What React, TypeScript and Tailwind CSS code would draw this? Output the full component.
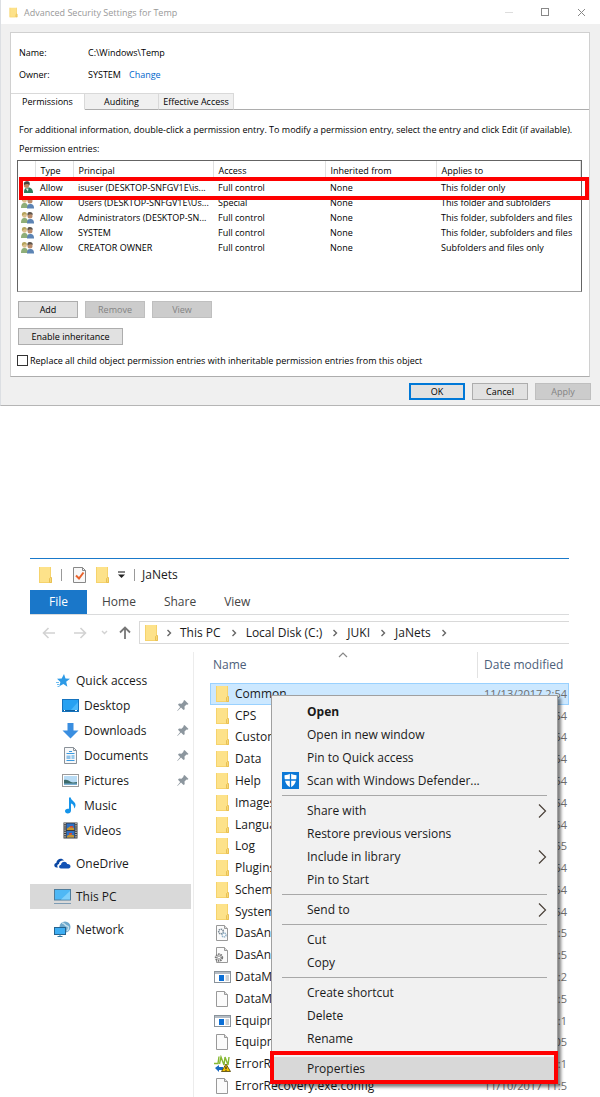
import type { ReactNode } from "react";
import { Fragment } from "react";

type IconProps = { className?: string };

type Permission = {
	principal: string;
	access: string;
	appliesTo: string;
	single?: boolean;
};

type FileKind = "folder" | "gears" | "config" | "exe" | "file" | "recovery";

type FileEntry = { name: string; date: string; kind: FileKind };

type MenuEntry = {
	label: string;
	bold?: boolean;
	submenu?: boolean;
	shield?: boolean;
};

const permissions: Permission[] = [
	{
		principal: "isuser (DESKTOP-SNFGV1E\\is...",
		access: "Full control",
		appliesTo: "This folder only",
		single: true,
	},
	{
		principal: "Users (DESKTOP-SNFGV1E\\Us...",
		access: "Special",
		appliesTo: "This folder and subfolders",
	},
	{
		principal: "Administrators (DESKTOP-SN...",
		access: "Full control",
		appliesTo: "This folder, subfolders and files",
	},
	{
		principal: "SYSTEM",
		access: "Full control",
		appliesTo: "This folder, subfolders and files",
	},
	{
		principal: "CREATOR OWNER",
		access: "Full control",
		appliesTo: "Subfolders and files only",
	},
];

const files: FileEntry[] = [
	{ name: "Common", date: "11/13/2017 2:54", kind: "folder" },
	{ name: "CPS", date: "11/13/2017 2:54", kind: "folder" },
	{ name: "Custom", date: "11/13/2017 2:54", kind: "folder" },
	{ name: "Data", date: "11/13/2017 2:54", kind: "folder" },
	{ name: "Help", date: "11/13/2017 2:54", kind: "folder" },
	{ name: "Images", date: "11/13/2017 2:54", kind: "folder" },
	{ name: "Language", date: "11/13/2017 2:54", kind: "folder" },
	{ name: "Log", date: "11/13/2017 2:55", kind: "folder" },
	{ name: "Plugins", date: "11/13/2017 2:54", kind: "folder" },
	{ name: "Schema", date: "11/13/2017 2:54", kind: "folder" },
	{ name: "System", date: "11/13/2017 2:54", kind: "folder" },
	{ name: "DasAnd", date: "11/10/2017 11:5", kind: "gears" },
	{ name: "DasAnd", date: "11/10/2017 11:5", kind: "config" },
	{ name: "DataMa", date: "11/10/2017 12:2", kind: "exe" },
	{ name: "DataMa", date: "11/10/2017 11:5", kind: "file" },
	{ name: "Equipm", date: "11/10/2017 12:1", kind: "exe" },
	{ name: "Equipm", date: "11/10/2017 9:05", kind: "file" },
	{ name: "ErrorRe", date: "11/10/2017 12:1", kind: "recovery" },
	{ name: "ErrorRecovery.exe.config", date: "11/10/2017 11:5", kind: "file" },
];

const menuGroups: MenuEntry[][] = [
	[
		{ label: "Open", bold: true },
		{ label: "Open in new window" },
		{ label: "Pin to Quick access" },
		{ label: "Scan with Windows Defender...", shield: true },
	],
	[
		{ label: "Share with", submenu: true },
		{ label: "Restore previous versions" },
		{ label: "Include in library", submenu: true },
		{ label: "Pin to Start" },
	],
	[{ label: "Send to", submenu: true }],
	[{ label: "Cut" }, { label: "Copy" }],
	[{ label: "Create shortcut" }, { label: "Delete" }, { label: "Rename" }],
];

const FolderIcon = ({ className = "w-[15px] h-[18px]" }: IconProps) => (
	<svg viewBox="0 0 15 18" className={className}>
		<path d="M1 1h12v11h1v5H1z" fill="#fde28a" />
		<path d="M1 1h1v16H1zM1 16h10v1H1zM12 1h1v11h-1z" fill="#f6d36c" />
		<path d="M11.500 16.500v-4l1-1h1v5z" fill="#f9d976" stroke="#e3b94a" strokeWidth=".8" />
	</svg>
);

const Page = ({ children }: { children?: ReactNode }) => (
	<svg viewBox="0 0 17 18" className="w-[17px] h-[18px]">
		<path d="M2.500 1.500h8l3 3v12h-11z" fill="#fbfbfb" stroke="#999" />
		<path d="M10.500 1.500v3h3" fill="#ddd" stroke="#999" />
		{children}
	</svg>
);

const FileIcon = ({ kind }: { kind: FileKind }) => {
	switch (kind) {
		case "folder":
			return <FolderIcon className="w-[15px] h-[18px] mx-px" />;
		case "gears":
			return (
				<Page>
					<circle cx="7" cy="7.500" r="2.300" fill="none" stroke="#7d8b96" strokeWidth="1.600" strokeDasharray="1.300 .6" />
					<circle cx="10" cy="11" r="2" fill="none" stroke="#8fb0c8" strokeWidth="1.500" strokeDasharray="1.200 .6" />
				</Page>
			);
		case "config":
			return (
				<Page>
					<circle cx="5" cy="11.500" r="3.200" fill="#eee" stroke="#777" strokeWidth="2" strokeDasharray="1.500 .8" />
					<circle cx="5" cy="11.500" r="1.500" fill="#fff" stroke="#888" strokeWidth=".8" />
				</Page>
			);
		case "exe":
			return (
				<svg viewBox="0 0 17 18" className="w-[17px] h-[18px]">
					<rect x=".5" y="3.500" width="16" height="11" fill="#fff" stroke="#8a939b" />
					<path d="M1 4h15v2H1z" fill="#b4bcc4" />
					<path d="M5 7h5v6H5z" fill="#0b6fd6" />
					<path d="M11.500 8h3.500M11.500 10h3.500M11.500 12h3.500" stroke="#9aa3ab" />
				</svg>
			);
		case "recovery":
			return (
				<svg viewBox="0 0 17 18" className="w-[17px] h-[18px]">
					<path d="M0 8.500h4L5 1.500M5.500 9L7 2l3 8 1-8 3 8 1-8" fill="none" stroke="#86b832" strokeWidth="1.400" />
					<path d="M1 13l4-3v2h4v3H5v2z" fill="#1769c2" />
					<path d="M12 9l4.500 7.500h-9z" fill="#f5c400" stroke="#4a3d00" strokeWidth=".8" />
					<path d="M12 11.500V14M12 14.800v1" stroke="#222" strokeWidth="1.200" />
				</svg>
			);
		default:
			return <Page />;
	}
};

const UserIcon = () => (
	<svg viewBox="0 0 13 13" className="w-[13px] h-[13px]">
		<path d="M3 12c0-4 1-5.500 4-5.500s5 1.500 5 5.500z" fill="#2f7d5b" />
		<path d="M4.500 7.500l2.500 3 .5-3z" fill="#dfe8e2" />
		<circle cx="5.500" cy="4.200" r="2.600" fill="#c08a62" />
		<path d="M3 4C2.500 1 4 .3 6 .3s3.500 1.200 2.500 4.200C7.500 3 6 2.500 3 4z" fill="#4a443d" />
	</svg>
);

const GroupIcon = () => (
	<svg viewBox="0 0 13 13" className="w-[13px] h-[13px]">
		<path d="M0 12c0-4 1.500-5 3.500-5S7 8 7 12z" fill="#8fae78" />
		<circle cx="3.500" cy="4.500" r="2.300" fill="#dcc08e" />
		<path d="M1 5c-.5-3.500 1-4 2.500-4S6 2 6 4C5 2.800 3 2.800 1 5z" fill="#b5a45c" />
		<path d="M6 12.500c0-4 1.500-4.500 3.500-4.500s3.500 1 3.500 4.500z" fill="#5c84b4" />
		<circle cx="9" cy="5" r="2.500" fill="#b98b6a" />
		<path d="M6.500 4.500C6 1.500 7.500 1 9 1s3.200 1 2.700 3C10.500 3 8.500 3 6.500 4.500z" fill="#5d544b" />
	</svg>
);

const StarIcon = () => (
	<svg viewBox="0 0 17 17" className="w-[17px] h-[17px]">
		<path d="M10 2l1.500 4.500 4.500.2-3.800 3 1.200 5-4-2.600-4 2.200 1-4.300L3 6.700l4.700-.2z" fill="#2d9ae6" />
		<path d="M2 10.500h3M3 12.500h2.500M3.500 14.500h2" stroke="#6dbcf0" />
	</svg>
);

const DesktopIcon = () => (
	<svg viewBox="0 0 17 17" className="w-[17px] h-[17px]">
		<rect x=".5" y="2.500" width="16" height="12" fill="#27a1f2" stroke="#1573be" />
		<path d="M8 14L16 5v9z" fill="#4cb8fa" />
		<path d="M1 13.500h15" stroke="#0f5f9f" />
		<path d="M2 13.500h1M13 13.500h2" stroke="#fff" />
	</svg>
);

const DownloadIcon = () => (
	<svg viewBox="0 0 17 17" className="w-[17px] h-[17px]">
		<path d="M5.500 1h6v7.500h5L8.500 16.500.5 8.500h5z" fill="#3a8ee0" />
	</svg>
);

const DocumentIcon = () => (
	<svg viewBox="0 0 17 17" className="w-[17px] h-[17px]">
		<path d="M2.500.5h9l3 3v13h-12z" fill="#f7f8f9" stroke="#8b9299" />
		<path d="M11.500.5v3h3" fill="none" stroke="#8b9299" />
		<path d="M7 4.500h3M4.500 6.500h8M9.500 9h3M9.500 11h3M4.500 13.500h8" stroke="#3b9ae0" strokeWidth="1.200" />
		<path d="M4.500 8.500h4v3.500h-4z" fill="#8ec1e8" />
	</svg>
);

const PictureIcon = () => (
	<svg viewBox="0 0 17 17" className="w-[17px] h-[17px]">
		<rect x=".5" y="2.500" width="16" height="12" fill="#fff" stroke="#9b9b9b" />
		<rect x="2" y="4" width="13" height="9" fill="#b9dcf5" />
		<path d="M2 8c3-1 5 1 7 2s4 0 6 0v3H2z" fill="#3d6b6b" />
		<path d="M2 11.500h13V13H2z" fill="#7ab0d4" />
	</svg>
);

const MusicIcon = () => (
	<svg viewBox="0 0 17 17" className="w-[17px] h-[17px]">
		<path d="M7 .5h1.800c0 3 4.700 4 4.700 7.500 0 1.500-.5 2.500-1.300 3.500 0-3-1.500-4.500-3.200-5v7c0 2-1.500 3-3.200 3S3 15.500 3 14s1.500-2.700 4-2.200z" fill="#1594ea" />
	</svg>
);

const VideoIcon = () => (
	<svg viewBox="0 0 17 17" className="w-[17px] h-[17px]">
		<rect x="1.500" y=".5" width="14" height="16" fill="#3a3a3a" />
		<path d="M3 1v15M14 1v15" stroke="#e5e5e5" strokeWidth="1.200" strokeDasharray="1.200 1" />
		<rect x="4.500" y="1.500" width="8" height="6.500" fill="#2d6fc4" />
		<rect x="4.500" y="9" width="8" height="6.500" fill="#2d6fc4" />
		<path d="M5 6.500l3-2 4 1.500v2H5zM5 14l3-2 4 1.500v2H5z" fill="#c8962c" />
		<path d="M8 4h3v1.500H8zM7 11h3v1.500H7z" fill="#d8432f" />
	</svg>
);

const CloudIcon = () => (
	<svg viewBox="0 0 17 17" className="w-[17px] h-[17px]">
		<path d="M4 12.500H2.500C-.5 12-.3 8.500 2.300 8 2.500 4 7.500 2 10 5.500c-3-.5-5 1-5 3.500-2 .5-2.200 2.500-1 3.500z" fill="#0a47a3" />
		<path d="M7 13.500c-2.500 0-2.500-3.500 0-3.700.3-3.500 5.200-4 6.200-.8 2-.3 3.300 1 3.300 2.300s-.8 2.200-2 2.200z" fill="#1252b5" />
	</svg>
);

const ComputerIcon = () => (
	<svg viewBox="0 0 17 17" className="w-[17px] h-[17px]">
		<rect x=".5" y="1.500" width="16" height="10.500" fill="#4fb8f5" stroke="#4f7c9b" />
		<path d="M7 11.500L16 3v8.500z" fill="#7fd0fb" />
		<path d="M0 15.500h17" stroke="#7d9bb3" />
	</svg>
);

const NetworkIcon = () => (
	<svg viewBox="0 0 17 17" className="w-[17px] h-[17px]">
		<circle cx="11" cy="6" r="5.500" fill="#6fa9cc" />
		<path d="M8 2c3 0 3 3 5 3s2 3 0 5" fill="none" stroke="#c5dfec" strokeWidth="1.500" />
		<rect x=".5" y="6.500" width="11" height="7" fill="#3eaef3" stroke="#25638f" />
		<path d="M6 13v2.500M3.500 15.500h5" stroke="#35789f" />
	</svg>
);

const PinIcon = () => (
	<svg viewBox="0 0 12 12" className="w-3 h-3">
		<path d="M7.500 0l4 4-1.200.8-.8-.3-2 2 .2 2.700-1.200.8-2.500-2.500L.5 11l-.3-.3 3-3.700L1 4.800l1-1.200 2.500.2 2-2L6.300 1z" fill="#8c969e" />
	</svg>
);

const ShieldIcon = () => (
	<svg viewBox="0 0 17 17" className="w-[17px] h-[17px]">
		<rect width="17" height="17" fill="#0b78d7" />
		<path d="M8.500 1.500c2 1.200 4 1.700 6 1.700 0 6-1.500 10-6 12.300-4.500-2.300-6-6.300-6-12.300 2 0 4-.5 6-1.700z" fill="#fff" />
		<path d="M8.500 1v15M2 8h13" stroke="#0b78d7" strokeWidth="1.300" />
	</svg>
);

const quickAccess = [
	{ label: "Desktop", icon: <DesktopIcon />, pinned: true },
	{ label: "Downloads", icon: <DownloadIcon />, pinned: true },
	{ label: "Documents", icon: <DocumentIcon />, pinned: true },
	{ label: "Pictures", icon: <PictureIcon />, pinned: true },
	{ label: "Music", icon: <MusicIcon />, pinned: false },
	{ label: "Videos", icon: <VideoIcon />, pinned: false },
];

const Crumb = ({ label }: { label: string }) => (
	<>
		<button type="button">{label}</button>
		<svg viewBox="0 0 6 8" className="ml-2.5 mr-[9px] h-2 w-1.5">
			<path d="M1.500 1l3 3-3 3" fill="none" stroke="#666" strokeWidth="1.400" />
		</svg>
	</>
);

const SecurityDialog = () => {
	const button = "h-[17px] border border-[#adadad] bg-[#e1e1e1]";
	const disabled = "h-[17px] border border-[#bfbfbf] bg-[#cccccc] text-[#838383]";

	return (
		<section className="border-l border-b border-l-[#dcdfe3] border-b-[#b5b5b5] bg-[#f0f0f0] text-[9px] leading-[15px] text-black">
			<header className="flex h-6 items-center bg-white pl-2 pr-3.5 text-[#999]">
				<FolderIcon className="w-[9px] h-[11px] mr-1.5" />
				<h1 className="flex-1">Advanced Security Settings for Temp</h1>
				<button type="button" aria-label="Minimize" className="mr-[27px]">
					<svg viewBox="0 0 9 9" className="w-[9px] h-[9px]">
						<path d="M0 4.500h8" stroke="#ddd" />
					</svg>
				</button>
				<button type="button" aria-label="Maximize" className="mr-[27px]">
					<svg viewBox="0 0 9 9" className="w-[9px] h-[9px]">
						<rect x=".5" y=".5" width="7" height="7" fill="none" stroke="#888" />
					</svg>
				</button>
				<button type="button" aria-label="Close">
					<svg viewBox="0 0 9 9" className="w-[9px] h-[9px]">
						<path d="M1 1l7 7M8 1L1 8" stroke="#888" />
					</svg>
				</button>
			</header>

			<div className="ml-[9px] mr-2.5 mt-2 border border-[#d0d0d0] border-b-[#adadad] bg-white">
				<dl className="grid grid-cols-[69px_1fr] gap-y-[7px] px-2 pt-3">
					<dt>Name:</dt>
					<dd>C:\Windows\Temp</dd>
					<dt>Owner:</dt>
					<dd>
						SYSTEM
						<a href="#owner" className="ml-2 text-[#0066cc]">
							Change
						</a>
					</dd>
				</dl>

				<div className="mt-[11px] flex h-[17px]" role="tablist">
					<button type="button" role="tab" className="w-[74px] border-t border-r border-b border-[#d9d9d9] border-b-white">
						Permissions
					</button>
					<button type="button" role="tab" className="w-[74px] border-t border-r border-b border-[#d9d9d9] border-b-[#adadad] bg-[#f0f0f0]">
						Auditing
					</button>
					<button type="button" role="tab" className="w-[75px] whitespace-nowrap border-t border-r border-b border-[#d9d9d9] border-b-[#adadad] bg-[#f0f0f0]">
						Effective Access
					</button>
					<div className="flex-1 border-b border-[#adadad]" />
				</div>

				<div className="pb-2 pl-1.5 pr-[7px] pt-3">
					<p className="whitespace-nowrap pl-0.5">
						For additional information, double-click a permission entry. To modify a permission entry, select the entry and click Edit (if available).
					</p>
					<p className="mt-1 pl-0.5">Permission entries:</p>

					<div className="relative mt-1 h-[132px] border border-[#646464] border-b-[#a0a0a0]">
						<table className="w-full table-fixed whitespace-nowrap text-left">
							<colgroup>
								<col className="w-[17px]" />
								<col className="w-[38px]" />
								<col className="w-[140px]" />
								<col className="w-[112px]" />
								<col className="w-[111px]" />
								<col />
							</colgroup>
							<thead>
								<tr className="h-[19px]">
									{["", "Type", "Principal", "Access", "Inherited from", "Applies to"].map((title) => (
										<th key={title} className="border-r border-[#e0e0e0] p-0 pl-[5px] font-normal">
											{title}
										</th>
									))}
								</tr>
							</thead>
							<tbody>
								{permissions.map((entry) => (
									<tr key={entry.principal} className="h-[15px]">
										<td className="p-0 pl-[3px]">
											{entry.single ? <UserIcon /> : <GroupIcon />}
										</td>
										<td className="p-0 pl-[5px]">Allow</td>
										<td className="p-0 pl-[5px]">{entry.principal}</td>
										<td className="p-0 pl-[5px]">{entry.access}</td>
										<td className="p-0 pl-[5px]">None</td>
										<td className="p-0 pl-[5px]">{entry.appliesTo}</td>
									</tr>
								))}
							</tbody>
						</table>
						<div className="pointer-events-none absolute top-4 left-px -right-2 h-[23px] border-4 border-[#fe0000]" />
					</div>

					<div className="mt-[9px] flex gap-[7px] pl-px">
						<button type="button" className={`w-[60px] ${button}`}>
							Add
						</button>
						<button type="button" disabled className={`w-[60px] ${disabled}`}>
							Remove
						</button>
						<button type="button" disabled className={`w-[60px] ${disabled}`}>
							View
						</button>
					</div>
					<div className="mt-2.5 flex pl-px">
						<button type="button" className={`w-[105px] ${button}`}>
							Enable inheritance
						</button>
					</div>
					<div className="mt-2 flex items-center gap-0.5">
						<input
							id="replace-children"
							type="checkbox"
							className="size-[11px] appearance-none border border-[#333] bg-white"
						/>
						<label htmlFor="replace-children">
							Replace all child object permission entries with inheritable permission entries from this object
						</label>
					</div>
				</div>
			</div>

			<footer className="flex justify-end gap-[7px] pb-[5px] pr-[9px] pt-1.5">
				<button type="button" className="h-[17px] w-14 border-2 border-[#0078d7] bg-[#e1e1e1] leading-[13px]">
					OK
				</button>
				<button type="button" className={`w-14 ${button}`}>
					Cancel
				</button>
				<button type="button" disabled className={`w-14 ${disabled}`}>
					Apply
				</button>
			</footer>
		</section>
	);
};

const Sidebar = () => (
	<nav className="w-[164px] shrink-0 border-r border-[#ececec] pt-4 text-[#1a1a1a]">
		<a href="#quick" className="flex h-[25px] items-center gap-[5px] pl-6">
			<StarIcon />
			Quick access
		</a>
		{quickAccess.map((item) => (
			<a key={item.label} href="#folder" className="flex h-[25px] items-center gap-[5px] pl-8 pr-1">
				{item.icon}
				<span className="flex-1">{item.label}</span>
				{item.pinned && <PinIcon />}
			</a>
		))}
		<a href="#onedrive" className="mt-2 flex h-[25px] items-center gap-[5px] pl-6">
			<CloudIcon />
			OneDrive
		</a>
		<a href="#pc" className="mr-0.5 mt-2 flex h-[25px] items-center gap-[5px] bg-[#d9d9d9] pl-6">
			<ComputerIcon />
			This PC
		</a>
		<a href="#network" className="mt-2 flex h-[25px] items-center gap-[5px] pl-6">
			<NetworkIcon />
			Network
		</a>
	</nav>
);

const FileList = () => (
	<table className="h-[445px] w-full table-fixed whitespace-nowrap text-left">
		<colgroup>
			<col />
			<col className="w-[92px]" />
		</colgroup>
		<thead>
			<tr className="h-[31px] text-[#4c607a]">
				<th className="relative p-0 pb-[5px] pl-[3px] font-normal">
					Name
					<svg viewBox="0 0 10 6" className="absolute left-1/2 top-0 -ml-1.5 h-1.5 w-2.5">
						<path d="M1 5l4-4 4 4" fill="none" stroke="#888" strokeWidth="1.200" />
					</svg>
				</th>
				<th className="p-0 pb-[5px] font-normal">
					<div className="border-l border-[#e2e2e2] py-[5px] pl-1.5">Date modified</div>
				</th>
			</tr>
		</thead>
		<tbody>
			{files.map((file, index) => (
				<tr
					key={index}
					className={index === 0 ? "bg-[#cce8ff] outline outline-1 -outline-offset-1 outline-[#99d1ff]" : ""}
				>
					<td className="p-0 pl-1">
						<div className="flex items-center gap-1">
							<FileIcon kind={file.kind} />
							<span className="text-[#1a1a1a]">{file.name}</span>
						</div>
					</td>
					<td className="overflow-hidden p-0 pl-[7px] text-[11px] text-[#6d6d6d]">{file.date}</td>
				</tr>
			))}
		</tbody>
	</table>
);

const ContextMenu = () => (
	<div
		role="menu"
		className="absolute left-[241px] top-[136px] w-[287px] border border-[#a0a0a0] bg-[#f1f1f1] pb-[3px] pt-1 text-[#1a1a1a] shadow-[3px_3px_3px_rgba(0,0,0,0.5)]"
	>
		{menuGroups.map((group, index) => (
			<Fragment key={index}>
				{group.map((item) => (
					<button
						key={item.label}
						type="button"
						role="menuitem"
						className="flex h-[23px] w-full items-center pl-2.5 pr-2.5 text-left"
					>
						<span className="w-[25px]">{item.shield && <ShieldIcon />}</span>
						<span className={item.bold ? "flex-1 font-bold" : "flex-1"}>{item.label}</span>
						{item.submenu && (
							<svg viewBox="0 0 9 14" className="h-3.5 w-[9px]">
								<path d="M1 .5L7.500 7 1 13.500" fill="none" stroke="#4a4038" strokeWidth="1.200" />
							</svg>
						)}
					</button>
				))}
				<hr className="mx-2.5 my-[3px] border-t border-[#a8a8a8]" />
			</Fragment>
		))}
		<button type="button" role="menuitem" className="flex h-[23px] w-full items-center bg-[#d8d8d8] pl-[35px] text-left">
			Properties
		</button>
		<div className="pointer-events-none absolute -bottom-px -left-0.5 -right-px h-[33px] border-4 border-[#fe0000]" />
	</div>
);

const Explorer = () => (
	<section className="relative ml-[30px] mr-[31px] mt-[152px] border-t border-[#1979ca] text-[12px] leading-4">
		<header className="flex h-[31px] items-center pl-2 text-[#1a1a1a]">
			<FolderIcon />
			<span className="ml-2 h-3 w-px bg-[#999]" />
			<button type="button" aria-label="Properties" className="ml-2.5">
				<svg viewBox="0 0 15 18" className="w-[15px] h-[18px]">
					<path d="M1.500 1.500h9l3 3v12h-12z" fill="#f8f8f8" stroke="#888" />
					<path d="M10.500 1.500v3h3" fill="none" stroke="#888" />
					<path d="M4 9.500l3 3 4.500-6" fill="none" stroke="#e8622c" strokeWidth="2" />
				</svg>
			</button>
			<button type="button" aria-label="New folder" className="ml-2">
				<FolderIcon />
			</button>
			<button type="button" aria-label="Customize" className="ml-[7px]">
				<svg viewBox="0 0 9 9" className="w-[9px] h-[9px]">
					<path d="M1 2h7" stroke="#333" strokeWidth="1.200" />
					<path d="M1 4.500h7L4.500 8z" fill="#222" />
				</svg>
			</button>
			<span className="ml-2 h-3 w-px bg-[#999]" />
			<h2 className="ml-[7px]">JaNets</h2>
		</header>

		<div className="flex h-[25px] border-b border-[#dadbdc] text-[#444]">
			<button type="button" className="w-[57px] bg-[#1a77c9] text-white">
				File
			</button>
			<div className="flex gap-7 pl-[15px]">
				<button type="button">Home</button>
				<button type="button">Share</button>
				<button type="button">View</button>
			</div>
		</div>

		<div className="mt-1.5 flex h-[23px] items-center">
			<button type="button" aria-label="Back" className="ml-3">
				<svg viewBox="0 0 14 12" className="w-3.5 h-3">
					<path d="M6.500 1l-5 5 5 5M1.500 6H13" fill="none" stroke="#d2d2d2" strokeWidth="1.600" />
				</svg>
			</button>
			<button type="button" aria-label="Forward" className="ml-[17px]">
				<svg viewBox="0 0 14 12" className="w-3.5 h-3">
					<path d="M7.500 1l5 5-5 5M12.500 6H1" fill="none" stroke="#d2d2d2" strokeWidth="1.600" />
				</svg>
			</button>
			<button type="button" aria-label="Recent locations" className="ml-3.5">
				<svg viewBox="0 0 7 5" className="w-[7px] h-[5px]">
					<path d="M1 1l2.500 2.500L6 1" fill="none" stroke="#d2d2d2" strokeWidth="1.400" />
				</svg>
			</button>
			<button type="button" aria-label="Up" className="ml-[11px]">
				<svg viewBox="0 0 12 13" className="w-3 h-[13px]">
					<path d="M1 6.500l5-5 5 5M6 1.500V13" fill="none" stroke="#777" strokeWidth="1.800" />
				</svg>
			</button>
			<div className="ml-2 flex h-[23px] flex-1 items-center border border-r-0 border-[#d9d9d9] pl-1 text-[#1a1a1a]">
				<FolderIcon />
				<svg viewBox="0 0 6 8" className="ml-[7px] mr-2 h-2 w-1.5">
					<path d="M1.500 1l3 3-3 3" fill="none" stroke="#666" strokeWidth="1.400" />
				</svg>
				<Crumb label="This PC" />
				<Crumb label="Local Disk (C:)" />
				<Crumb label="JUKI" />
				<Crumb label="JaNets" />
			</div>
		</div>

		<div className="mt-2 flex">
			<Sidebar />
			<div className="min-w-0 flex-1 pl-4">
				<FileList />
			</div>
		</div>

		<ContextMenu />
	</section>
);

const App = () => (
	<main className="bg-white font-['Open_Sans',sans-serif]">
		<SecurityDialog />
		<Explorer />
	</main>
);

export default App;
